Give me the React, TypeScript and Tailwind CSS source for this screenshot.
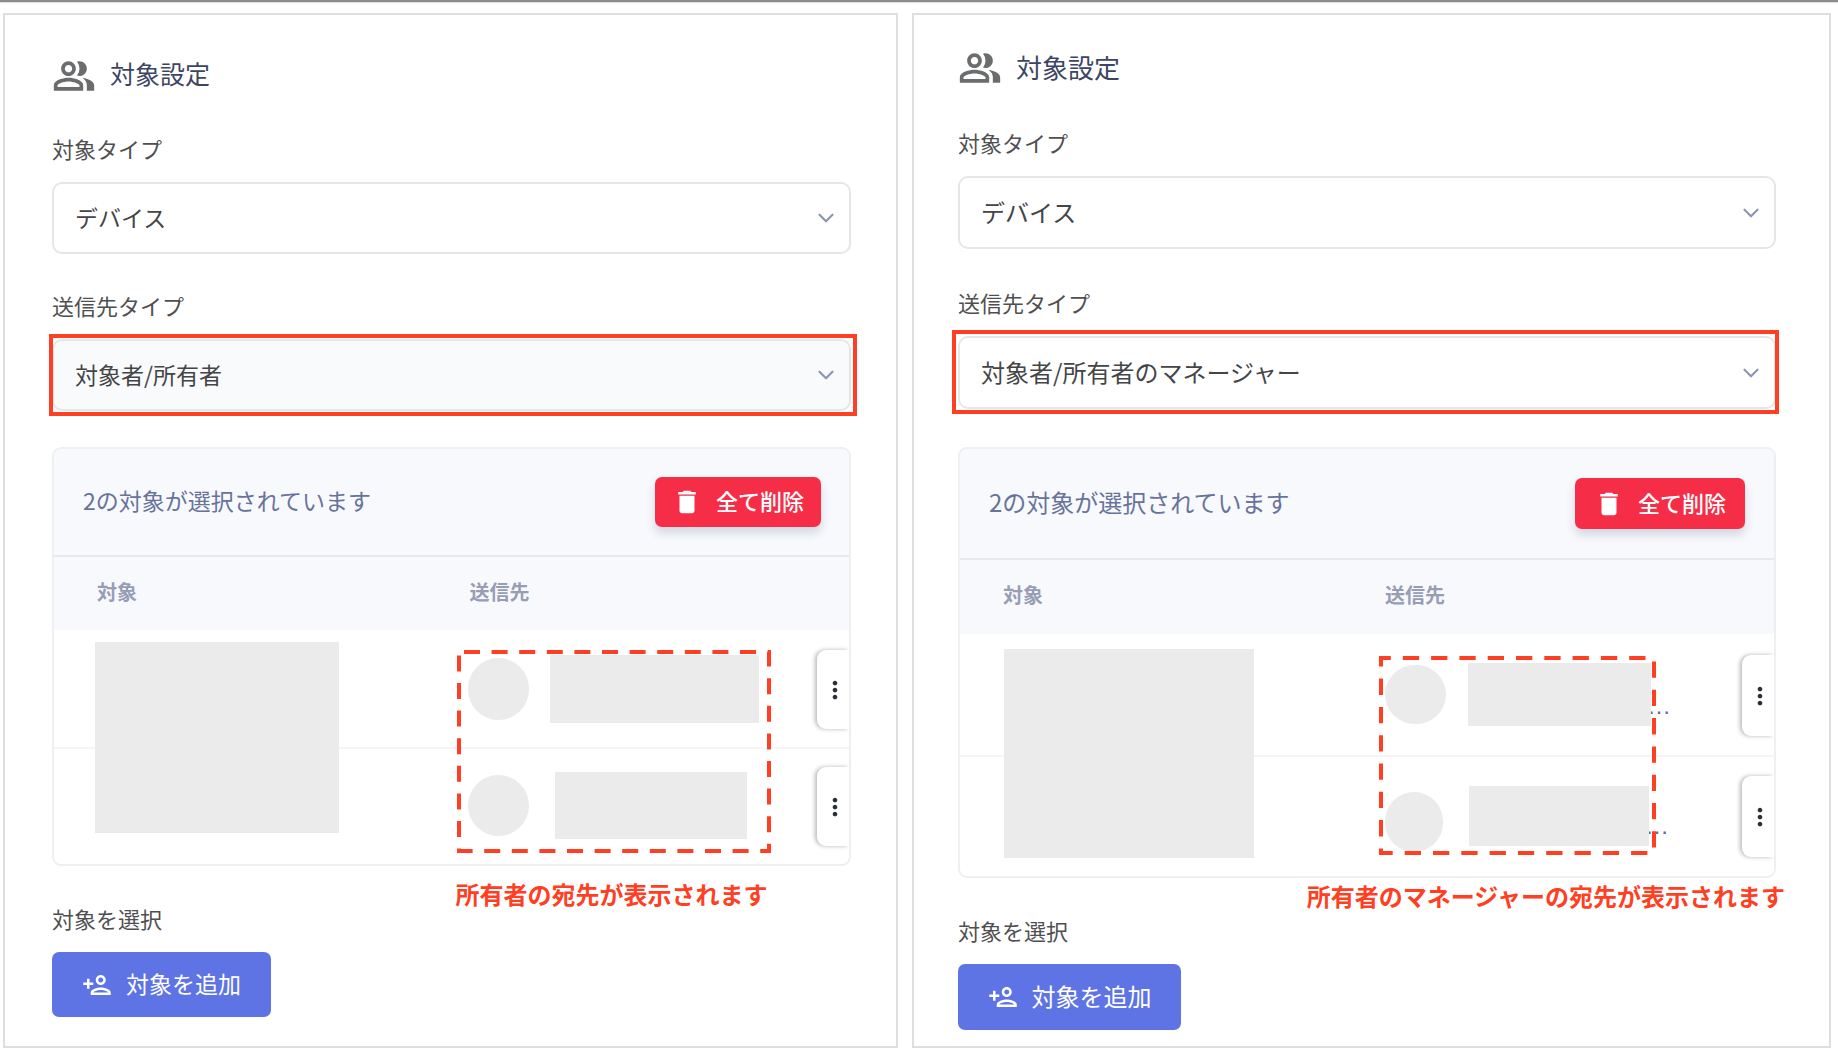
import { ChevronDown } from "lucide-react";
import { MdDelete, MdMoreVert, MdOutlinePeopleAlt, MdOutlinePersonAdd } from "react-icons/md";

type Row = {
  id: string;
  avatar: string;
  name: string;
  truncated?: boolean;
};

type PanelProps = {
  id: string;
  destination: string;
  caption: string;
  rows: Row[];
  dash: { width: number; height: number; pattern: string; offset: number };
  styles: Record<string, string>;
};

const LEFT_STYLES = {
  panel: "pt-[39px] pl-[47px] pr-[45px]",
  title: "text-[25px]",
  text: "text-[23px]",
  firstLabel: "mt-9",
  label: "mt-[37px]",
  select: "h-[72px]",
  destination: "bg-[#f9fafb]",
  highlight: "-top-[5px] -right-[6px] -bottom-[5px] -left-[3px]",
  card: "mt-9",
  toolbar: "h-[108px] pr-[28px]",
  clear: "h-[50px] w-[166px]",
  head: "h-[73px]",
  row: "h-[117px]",
  mask: "top-[12px] left-[41px] h-[191px] w-[244px]",
  cell: "pl-[16px]",
  box: "top-[20px] left-[5px]",
  menu: "h-[79px]",
  caption: "mt-[12px] left-1/2 ml-1",
  bottomLabel: "mt-[38px]",
  add: "h-[65px] w-[219px]",
};

const RIGHT_STYLES = {
  panel: "pt-[31px] pl-[44px] pr-[53px]",
  title: "text-[26px]",
  text: "text-[24px]",
  firstLabel: "mt-[38px]",
  label: "mt-[39px]",
  select: "h-[73px]",
  destination: "bg-white",
  highlight: "-top-[6px] -right-[3px] -bottom-[5px] -left-[6px]",
  card: "mt-[38px]",
  toolbar: "h-[111px] pr-[29px]",
  clear: "h-[51px] w-[170px]",
  head: "h-[74px]",
  row: "h-[121px]",
  mask: "top-[15px] left-[44px] h-[209px] w-[250px]",
  cell: "pl-[18px]",
  box: "top-[22px] left-[12px]",
  menu: "h-[81px]",
  caption: "mt-[2px] -right-[9px]",
  bottomLabel: "mt-[38px]",
  add: "h-[66px] w-[223px]",
};

const LEFT_ROWS: Row[] = [
  { id: "1", avatar: "h-[62px] w-[61px]", name: "ml-[21px] h-[68px] w-[209px]" },
  { id: "2", avatar: "h-[61px] w-[61px]", name: "ml-[26px] h-[67px] w-[192px]" },
];

const RIGHT_ROWS: Row[] = [
  { id: "1", avatar: "h-[59px] w-[61px]", name: "ml-[22px] h-[63px] w-[183px]", truncated: true },
  { id: "2", avatar: "mt-3 h-[60px] w-[58px]", name: "ml-[26px] h-[60px] w-[180px]", truncated: true },
];

function SelectField({
  id,
  label,
  value,
  labelClass,
  selectClass,
  highlight,
}: {
  id: string;
  label: string;
  value: string;
  labelClass: string;
  selectClass: string;
  highlight?: string;
}) {
  return (
    <div className={labelClass}>
      <label htmlFor={id} className="block text-[22px] leading-7 text-[#4f4f51]">
        {label}
      </label>
      <div className="relative mt-5">
        <select
          id={id}
          className={`block w-full appearance-none rounded-[10px] border-2 border-[#e6e6e6] px-[21px] pb-[2px] text-[#444547] ${selectClass}`}
        >
          <option>{value}</option>
        </select>
        <ChevronDown
          className="pointer-events-none absolute top-1/2 right-[12px] -translate-y-1/2 text-[#8d96b0]"
          size={26}
          strokeWidth={2}
          aria-hidden
        />
        {highlight && (
          <span
            className={`pointer-events-none absolute border-4 border-[#ff3f24] ${highlight}`}
            aria-hidden
          />
        )}
      </div>
    </div>
  );
}

function TargetTable({ rows, dash, styles }: Pick<PanelProps, "rows" | "dash" | "styles">) {
  return (
    <table className="w-full table-fixed border-collapse text-left">
      <colgroup>
        <col className="w-1/2" />
        <col />
        <col className="w-[32px]" />
      </colgroup>
      <thead className="bg-[#f8f9fd] text-[20px] text-[#969db4]">
        <tr className={styles.head}>
          <th className="p-0 pb-1 pl-[43px] font-bold">対象</th>
          <th className="p-0 pb-1 pl-[18px] font-bold">送信先</th>
          <th className="p-0" aria-label="操作" />
        </tr>
      </thead>
      <tbody>
        {rows.map((row, i) => (
          <tr
            key={row.id}
            className={i > 0 ? `${styles.row} shadow-[inset_0_2px_0_#f5f5f6]` : styles.row}
          >
            <td className="relative p-0">
              {i === 0 && <div className={`absolute z-10 bg-[#ebebeb] ${styles.mask}`} />}
            </td>
            <td className={`relative py-0 pr-0 ${styles.cell}`}>
              <div className="flex items-center">
                <span className={`shrink-0 rounded-full bg-[#ebebeb] ${row.avatar}`} />
                <div className="flex items-end">
                  <span className={`relative z-10 shrink-0 bg-[#ebebeb] ${row.name}`} />
                  {row.truncated && (
                    <span className="-ml-1 pb-1 font-['Liberation_Sans',sans-serif] text-[24px] leading-8 text-[#5f6d98]">
                      …
                    </span>
                  )}
                </div>
              </div>
              {i === 0 && (
                <svg
                  className={`pointer-events-none absolute z-20 ${styles.box}`}
                  width={dash.width + 4}
                  height={dash.height + 4}
                  aria-hidden
                >
                  <rect
                    x="2"
                    y="2"
                    width={dash.width}
                    height={dash.height}
                    fill="none"
                    stroke="#ff3f24"
                    strokeWidth="4"
                    strokeDasharray={dash.pattern}
                    strokeDashoffset={dash.offset}
                  />
                </svg>
              )}
            </td>
            <td className="p-0 pt-[2px]">
              <button
                type="button"
                aria-label="メニュー"
                className={`flex w-full items-center justify-center rounded-l-[9px] bg-white pl-1 text-[#2b2f36] shadow-[-2px_0_4px_rgba(0,0,0,0.28)] ${styles.menu}`}
              >
                <MdMoreVert size={28} />
              </button>
            </td>
          </tr>
        ))}
      </tbody>
    </table>
  );
}

function TargetPanel({ id, destination, caption, rows, dash, styles }: PanelProps) {
  return (
    <section className={`border-2 border-[#dedede] bg-white pb-4 ${styles.panel}`}>
      <h2 className={`flex h-11 items-center gap-[14px] text-[#3c4662] ${styles.title}`}>
        <MdOutlinePeopleAlt size={44} className="text-[#6b6c6e]" aria-hidden />
        <span className="pb-1">対象設定</span>
      </h2>

      <SelectField
        id={`${id}-type`}
        label="対象タイプ"
        value="デバイス"
        labelClass={styles.firstLabel}
        selectClass={`bg-white ${styles.select} ${styles.text}`}
      />
      <SelectField
        id={`${id}-destination`}
        label="送信先タイプ"
        value={destination}
        labelClass={styles.label}
        selectClass={`${styles.destination} ${styles.select} ${styles.text}`}
        highlight={styles.highlight}
      />

      <div className={`relative ${styles.card}`}>
        <div className="overflow-hidden rounded-[9px] border-2 border-[#eeeff1]">
          <div
            className={`flex items-center justify-between border-b-2 border-[#e8eaed] bg-[#f8f9fd] pl-[29px] ${styles.toolbar}`}
          >
            <p className={`pb-1 text-[#67739a] ${styles.text}`}>2の対象が選択されています</p>
            <button
              type="button"
              className={`flex items-center justify-center gap-[14px] rounded-[7px] bg-[#f52d47] text-[22px] font-medium text-white shadow-[0_6px_10px_rgba(50,60,100,0.18)] ${styles.clear}`}
            >
              <MdDelete size={30} aria-hidden />
              <span className="pb-[3px]">全て削除</span>
            </button>
          </div>
          <TargetTable rows={rows} dash={dash} styles={styles} />
        </div>
        <p
          className={`absolute top-full text-[24px] leading-8 font-bold whitespace-nowrap text-[#ff3f24] ${styles.caption}`}
        >
          {caption}
        </p>
      </div>

      <p className={`text-[22px] leading-7 text-[#4f4f51] ${styles.bottomLabel}`}>対象を選択</p>
      <button
        type="button"
        className={`mt-5 flex items-center justify-center gap-[14px] rounded-[7px] bg-[#5f74e4] text-white ${styles.add} ${styles.text}`}
      >
        <MdOutlinePersonAdd size={30} aria-hidden />
        <span className="pb-[2px]">対象を追加</span>
      </button>
    </section>
  );
}

export default function App() {
  return (
    <main className="min-h-screen border-t-2 border-[#8e8c8d] bg-white font-['Noto_Sans_CJK_JP',sans-serif]">
      <div className="grid grid-cols-[895fr_919fr] gap-[14px] border-t border-[#dcdcdc] pt-[10px] pr-[7px] pb-2 pl-[3px]">
        <TargetPanel
          id="owner"
          destination="対象者/所有者"
          caption="所有者の宛先が表示されます"
          rows={LEFT_ROWS}
          dash={{ width: 310, height: 199, pattern: "16 11.6", offset: -5 }}
          styles={LEFT_STYLES}
        />
        <TargetPanel
          id="manager"
          destination="対象者/所有者のマネージャー"
          caption="所有者のマネージャーの宛先が表示されます"
          rows={RIGHT_ROWS}
          dash={{ width: 273, height: 195, pattern: "16.3 12", offset: 6.5 }}
          styles={RIGHT_STYLES}
        />
      </div>
    </main>
  );
}
